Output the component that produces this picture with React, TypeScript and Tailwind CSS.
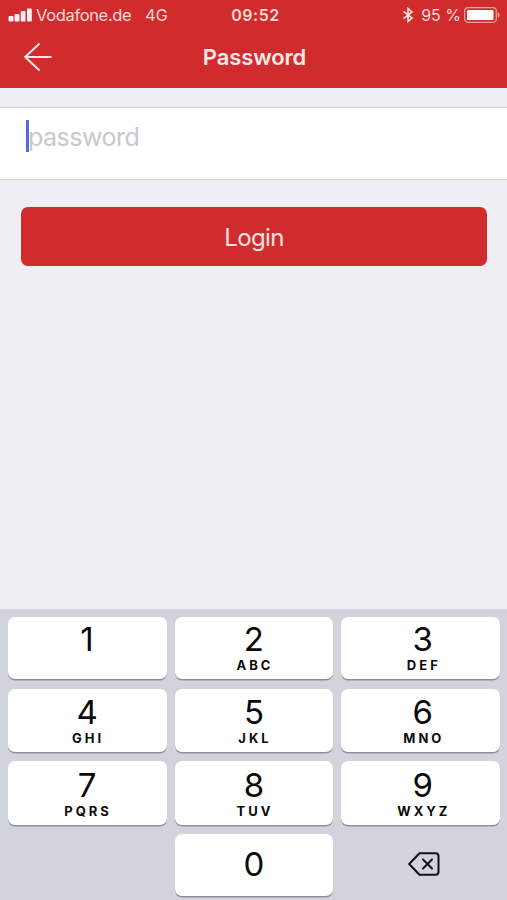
import React from "react";

type KeyDef = { digit: string; letters?: string };

const rows: { keyClass: string; keys: KeyDef[] }[] = [
  {
    keyClass: "h-[62px] pt-[4px]",
    keys: [{ digit: "1" }, { digit: "2", letters: "ABC" }, { digit: "3", letters: "DEF" }],
  },
  {
    keyClass: "h-[63px] pt-[5px]",
    keys: [{ digit: "4", letters: "GHI" }, { digit: "5", letters: "JKL" }, { digit: "6", letters: "MNO" }],
  },
  {
    keyClass: "h-[63.5px] pt-[5.5px]",
    keys: [{ digit: "7", letters: "PQRS" }, { digit: "8", letters: "TUV" }, { digit: "9", letters: "WXYZ" }],
  },
];

function Key({ digit, letters, className }: KeyDef & { className: string }) {
  return (
    <button
      type="button"
      className={`${className} flex flex-col items-center rounded-[7px] bg-white text-[#0a0a0c] shadow-[0_1.5px_0_#8e9095]`}
    >
      <span className="text-[33px] leading-[36px]">{digit}</span>
      {letters && (
        <span className="pl-[2px] text-[13px] leading-[17px] font-bold tracking-[3px]">{letters}</span>
      )}
    </button>
  );
}

function StatusBar() {
  return (
    <div className="grid h-[30px] grid-cols-[1fr_100px_1fr] items-center text-[#ffd9d6]">
      <div className="flex items-center pl-2">
        <svg className="shrink-0" width="24" height="14" viewBox="0 0 24 14" fill="#fff1ef">
          <rect x="0.5" y="8" width="5" height="5.5" rx="1" />
          <rect x="6.5" y="6" width="5" height="7.5" rx="1" />
          <rect x="12.7" y="3" width="4.8" height="10.5" rx="1" />
          <rect x="19" y="0.5" width="4.8" height="13" rx="1" />
        </svg>
        <span className="ml-[4px] text-[16.5px] tracking-[-0.35px] whitespace-nowrap">Vodafone.de</span>
        <span className="ml-[14px] text-[16px]">4G</span>
      </div>
      <div className="pl-[4px] text-center text-[16px] font-semibold tracking-[0.5px]">09:52</div>
      <div className="flex items-center justify-end pr-[6px]">
        <svg className="shrink-0" width="12" height="16" viewBox="0 0 12 16" fill="none" stroke="#ffe6e3" strokeWidth="1.6">
          <path d="M1.5 4.3 10 11 6 14.5V1.5L10 5 1.5 11.7" />
        </svg>
        <span className="ml-[7px] text-[16px] whitespace-nowrap">95 %</span>
        <svg className="ml-[3px] shrink-0" width="37" height="17" viewBox="0 0 37 17" fill="none">
          <rect x="0.7" y="0.7" width="31.6" height="14.6" rx="3.5" stroke="#f7a09b" strokeWidth="1.2" />
          <rect x="3" y="2.9" width="26.5" height="10.2" rx="1.2" fill="#fff" />
          <path d="M34 5.5v5c1.8-.7 1.8-4.3 0-5Z" fill="#f7a09b" stroke="#f7a09b" strokeWidth="0.6" />
        </svg>
      </div>
    </div>
  );
}

export default function App() {
  return (
    <div className="flex h-[900px] w-[507px] flex-col overflow-hidden bg-[#efeef4] font-['Inter','Liberation_Sans',sans-serif]">
      <header className="h-[88px] shrink-0 bg-[#d02c2e]">
        <StatusBar />
        <div className="grid h-[54px] grid-cols-[100px_1fr_100px] items-center">
          <button type="button" aria-label="Back" className="pl-[22px]">
            <svg width="30" height="30" viewBox="0 0 30 30" fill="none" stroke="#ffe6e2" strokeWidth="2">
              <path d="M17.5 1.5 3.2 15l14.3 13.5M3.2 15h26.3" />
            </svg>
          </button>
          <h1 className="pl-[2px] text-center text-[22px] font-semibold tracking-[-0.1px] text-[#ffe9e6]">Password</h1>
        </div>
      </header>

      <main className="flex-1">
        <div className="mt-[19px] flex h-[73px] items-start border-y border-[#d2d2d7] bg-white pt-[12px] pl-[26px]">
          <div className="h-[32px] w-[3px] bg-[#526bd6]" />
          <span className="-ml-[1px] text-[25px] leading-[35px] tracking-[-0.5px] text-[#c8c8cd]">password</span>
        </div>
        <button
          type="button"
          className="mt-[27px] ml-[21px] flex h-[59px] w-[466px] items-center justify-center rounded-[7px] bg-[#d02c2e] pt-[2px] text-[24px] tracking-[-0.6px] text-[#ffe4e0]"
        >
          Login
        </button>
      </main>

      <section className="flex h-[291px] shrink-0 flex-col gap-[9.5px] bg-[#d1d4dc] pt-[8px] pr-[7.5px] pl-[8.4px]">
        {rows.map((row) => (
          <div
            key={row.keys[0].digit}
            className="grid grid-cols-3 gap-[8px] [&>*:first-child]:pr-[1px] [&>*:last-child]:pl-[5px]"
          >
            {row.keys.map((key) => (
              <Key key={key.digit} digit={key.digit} letters={key.letters} className={row.keyClass} />
            ))}
          </div>
        ))}
        <div className="grid grid-cols-3 gap-[8px]">
          <span />
          <button
            type="button"
            className="flex h-[62px] items-center justify-center rounded-[7px] bg-white text-[33px] text-[#0a0a0c] shadow-[0_1.5px_0_#8e9095]"
          >
            0
          </button>
          <button type="button" aria-label="Delete" className="flex items-center justify-center pb-[2px] pl-[7px]">
            <svg width="32" height="24" viewBox="0 0 32 24" fill="none" stroke="#111216" strokeWidth="2" strokeLinejoin="round">
              <path d="M11.5 1.2h16a3 3 0 0 1 3 3v15.6a3 3 0 0 1-3 3h-16L1.2 12Z" />
              <path d="m15 7.5 9 9m0-9-9 9" strokeLinecap="round" />
            </svg>
          </button>
        </div>
      </section>
    </div>
  );
}
